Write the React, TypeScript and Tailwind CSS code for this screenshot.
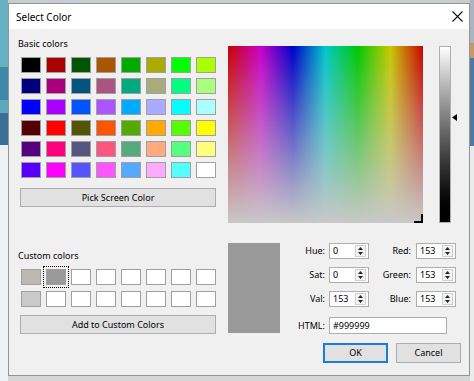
import React from "react";

const basic = [
  ["#000000", "#aa0000", "#005500", "#aa5500", "#00aa00", "#aaaa00", "#00ff00", "#aaff00"],
  ["#00007f", "#aa007f", "#00557f", "#aa557f", "#00aa7f", "#aaaa7f", "#00ff7f", "#aaff7f"],
  ["#0000ff", "#aa00ff", "#0055ff", "#aa55ff", "#00aaff", "#aaaaff", "#00ffff", "#aaffff"],
  ["#550000", "#ff0000", "#555500", "#ff5500", "#55aa00", "#ffaa00", "#55ff00", "#ffff00"],
  ["#55007f", "#ff007f", "#55557f", "#ff557f", "#55aa7f", "#ffaa7f", "#55ff7f", "#ffff7f"],
  ["#5500ff", "#ff00ff", "#5555ff", "#ff55ff", "#55aaff", "#ffaaff", "#55ffff", "#ffffff"],
];

const custom = [
  ["#bcb9b2", "#999999", "#ffffff", "#ffffff", "#ffffff", "#ffffff", "#ffffff", "#ffffff"],
  ["#c9c9c9", "#ffffff", "#ffffff", "#ffffff", "#ffffff", "#ffffff", "#ffffff", "#ffffff"],
];

function Swatch({ color, selected }: { color: string; selected?: boolean }) {
  return (
    <div
      className={`h-[16px] w-[20px] border border-[#a0a0a0] ${
        selected ? "outline-1 outline-offset-[2px] outline-dotted outline-black" : ""
      }`}
      style={{ backgroundColor: color }}
    />
  );
}

function Spin({ value }: { value: string }) {
  return (
    <div className="flex h-[16px] w-[40px] items-center border border-[#adadad] bg-white">
      <span className="flex-1 pl-[3px] leading-[14px]">{value}</span>
      <div className="mr-[2px] flex h-[12px] w-[11px] flex-col items-center justify-center gap-[2px] border border-[#cfcfcf] bg-[#f2f2f2]">
        <svg width="5" height="3" viewBox="0 0 5 3">
          <path d="M0 3 L2.5 0 L5 3 Z" fill="#222" />
        </svg>
        <svg width="5" height="3" viewBox="0 0 5 3">
          <path d="M0 0 L5 0 L2.5 3 Z" fill="#222" />
        </svg>
      </div>
    </div>
  );
}

function FieldRow({ a, av, b, bv }: { a: string; av: string; b: string; bv: string }) {
  return (
    <div className="flex h-[16px] items-center">
      <span className="w-[45px] text-right">{a}</span>
      <div className="ml-[4px]">
        <Spin value={av} />
      </div>
      <span className="w-[42px] text-right">{b}</span>
      <div className="ml-[5px]">
        <Spin value={bv} />
      </div>
    </div>
  );
}

export default function App() {
  return (
    <div className="flex h-[381px] w-[474px] overflow-hidden bg-[#d4d8db] font-['Noto_Sans',sans-serif] text-[9px] text-black">
      <div className="flex w-[8px] flex-col">
        <div className="h-[67px] bg-[#67afc2]" />
        <div className="h-[33px] bg-[#3f86a9]" />
        <div className="h-[13px] bg-[#5ea7bd]" />
        <div className="h-[32px] bg-[#3a6e94]" />
        <div className="flex-1 bg-[#eef1f3]" />
      </div>

      <div className="flex w-[462px] flex-col">
        <div className="h-[3px] bg-[#c7ccd0]" />
        <div className="flex h-[373px] flex-col border border-[#949494] bg-[#f0f0f0]">
          <div className="flex h-[25px] items-center justify-between bg-white pl-[7px] pr-[6px]">
            <span className="text-[10px] leading-[14px]">Select Color</span>
            <svg width="11" height="11" viewBox="0 0 11 11">
              <path d="M0.5 0.5 L10.5 10.5 M10.5 0.5 L0.5 10.5" stroke="#111" strokeWidth="1.1" />
            </svg>
          </div>

          <div className="flex pl-[9px]">
            <div className="flex w-[198px] flex-col pt-[8px]">
              <span className="leading-[14px]">Basic colors</span>
              <div className="ml-[3px] mt-[6px] grid grid-cols-8 gap-x-[5px] gap-y-[5px]">
                {basic.flat().map((c, i) => (
                  <Swatch key={i} color={c} />
                ))}
              </div>
              <button className="ml-[2px] mt-[10px] h-[19px] w-[196px] border border-[#adadad] bg-[#e1e1e1] leading-[17px]">
                Pick Screen Color
              </button>

              <span className="mt-[42px] leading-[14px]">Custom colors</span>
              <div className="ml-[3px] mt-[6px] grid grid-cols-8 gap-x-[5px] gap-y-[6px]">
                {custom.flat().map((c, i) => (
                  <Swatch key={i} color={c} selected={i === 1} />
                ))}
              </div>
              <button className="ml-[2px] mt-[8px] h-[19px] w-[196px] border border-[#adadad] bg-[#e1e1e1] leading-[17px]">
                Add to Custom Colors
              </button>
            </div>

            <div className="ml-[12px] flex w-[241px] flex-col pt-[17px]">
              <div className="flex">
                <div className="flex h-[177px] w-[195px] flex-col justify-end bg-[linear-gradient(to_bottom,rgba(200,200,200,0),#c8c8c8),linear-gradient(to_right,#c80000,#c800c8,#0000c8,#00c8c8,#00c800,#c8c800,#c80000)]">
                  <div className="flex justify-end">
                    <svg width="9" height="9" viewBox="0 0 9 9">
                      <path d="M0 8 L9 8 M8 0 L8 9" stroke="#000" strokeWidth="2" />
                    </svg>
                  </div>
                </div>
                <div className="ml-[16px] h-[177px] w-[12px] border border-[#b0b0b0] bg-linear-to-b from-white to-black" />
                <div className="ml-[1px] mt-[68px]">
                  <svg width="5" height="7" viewBox="0 0 5 7">
                    <path d="M0 3.5 L5 0 L5 7 Z" fill="#000" />
                  </svg>
                </div>
              </div>

              <div className="mt-[20px] flex">
                <div className="h-[90px] w-[52px] bg-[#999999]" />
                <div className="flex flex-col">
                  <div className="flex flex-col gap-[8px]">
                    <FieldRow a="Hue:" av="0" b="Red:" bv="153" />
                    <FieldRow a="Sat:" av="0" b="Green:" bv="153" />
                    <FieldRow a="Val:" av="153" b="Blue:" bv="153" />
                  </div>
                  <div className="mt-[10px] flex items-center">
                    <span className="w-[45px] text-right">HTML:</span>
                    <div className="ml-[4px] flex h-[17px] w-[118px] items-center border border-[#adadad] bg-white pl-[3px]">
                      #999999
                    </div>
                  </div>
                </div>
              </div>

              <div className="ml-[95px] mt-[9px] flex gap-[8px]">
                <button className="h-[20px] w-[65px] border-2 border-[#1a7fd4] bg-[#e1e1e1] leading-[16px]">
                  OK
                </button>
                <button className="h-[20px] w-[65px] border border-[#adadad] bg-[#e1e1e1] leading-[18px]">
                  Cancel
                </button>
              </div>
            </div>
          </div>
        </div>
        <div className="h-[5px] bg-[#d6d6d6]" />
      </div>

      <div className="flex w-[4px] flex-col">
        <div className="h-[43px] bg-[#a9b5bf]" />
        <div className="h-[15px] bg-[#c49a6c]" />
        <div className="h-[88px] bg-[#4d7aa0]" />
        <div className="flex-1 bg-[#e9ecee]" />
      </div>
    </div>
  );
}
